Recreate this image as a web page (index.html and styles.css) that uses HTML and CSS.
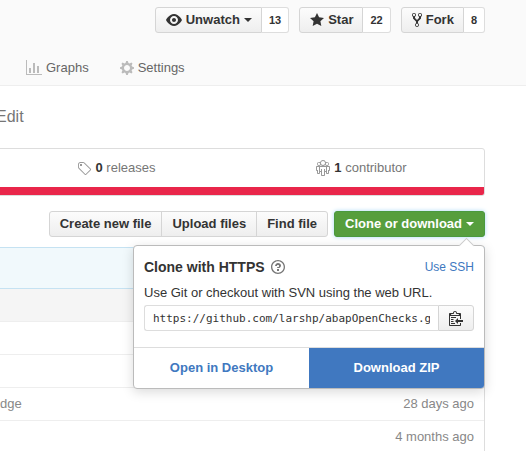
FILE: index.html
```html
<!DOCTYPE html>
<html lang="en">
<head>
<meta charset="utf-8">
<title>larshp/abapOpenChecks</title>
<link rel="stylesheet" href="styles.css">
</head>
<body>
<header class="pagehead">
  <div class="social">
    <div class="social-item">
      <button class="btn btn-group-first" type="button"><svg width="16" height="16" viewBox="0 0 16 16"><path d="M8.06 2C3 2 0 8 0 8s3 6 8.06 6C13 14 16 8 16 8s-3-6-7.94-6zM8 12c-2.2 0-4-1.78-4-4 0-2.2 1.8-4 4-4 2.22 0 4 1.8 4 4 0 2.22-1.78 4-4 4zm2-4c0 1.11-.89 2-2 2-1.11 0-2-.89-2-2 0-1.11.89-2 2-2 1.11 0 2 .89 2 2z"/></svg>Unwatch<span class="arrow"></span></button>
      <a class="count" href="#watchers">13</a>
    </div>
    <div class="social-item">
      <button class="btn btn-group-first" type="button"><svg width="14" height="16" viewBox="0 0 14 16"><path d="M14 6l-4.9-.64L7 1 4.9 5.36 0 6l3.6 3.26L2.67 14 7 11.67 11.33 14l-.93-4.74z"/></svg>Star</button>
      <a class="count" href="#stargazers">22</a>
    </div>
    <div class="social-item">
      <button class="btn btn-group-first" type="button"><svg width="10" height="16" viewBox="0 0 10 16"><path d="M8 1a1.993 1.993 0 0 0-1 3.72V6L5 8 3 6V4.72A1.993 1.993 0 0 0 2 1a1.993 1.993 0 0 0-1 3.72V6.5l3 3v1.78A1.993 1.993 0 0 0 5 15a1.993 1.993 0 0 0 1-3.72V9.5l3-3V4.72A1.993 1.993 0 0 0 8 1zM2 4.2C1.34 4.2.8 3.65.8 3c0-.65.55-1.2 1.2-1.2.65 0 1.2.55 1.2 1.2 0 .65-.55 1.2-1.2 1.2zm3 10c-.66 0-1.2-.55-1.2-1.2 0-.65.55-1.2 1.2-1.2.65 0 1.2.55 1.2 1.2 0 .65-.55 1.2-1.2 1.2zm3-10c-.66 0-1.2-.55-1.2-1.2 0-.65.55-1.2 1.2-1.2.65 0 1.2.55 1.2 1.2 0 .65-.55 1.2-1.2 1.2z"/></svg>Fork</button>
      <a class="count" href="#forks">8</a>
    </div>
  </div>
  <nav class="tabs">
    <a href="#graphs"><svg width="16" height="16" viewBox="0 0 16 16"><path d="M16 14v1H0V0h1v14h15zM5 13H3V8h2v5zm4 0H7V3h2v10zm4 0h-2V6h2v7z"/></svg>Graphs</a>
    <a href="#settings"><svg width="14" height="16" viewBox="0 0 14 16"><path d="M14 8.77v-1.6l-1.94-.64-.45-1.09.88-1.84-1.13-1.13-1.81.91-1.09-.45-.69-1.92h-1.6l-.63 1.94-1.11.45-1.84-.88-1.13 1.13.91 1.81-.45 1.09L0 7.23v1.59l1.94.64.45 1.09-.88 1.84 1.13 1.13 1.81-.91 1.09.45.69 1.92h1.59l.63-1.94 1.11-.45 1.84.88 1.13-1.13-.92-1.81.47-1.09L14 8.75v.02zM7 11c-1.66 0-3-1.34-3-3s1.34-3 3-3 3 1.34 3 3-1.34 3-3 3z"/></svg>Settings</a>
  </nav>
</header>
<main class="content">
  <a class="edit" href="#edit">Edit</a>
  <section class="summary">
    <div class="stats">
      <a href="#releases"><svg width="14" height="16" viewBox="0 0 14 16"><path d="M6.73 2.73c-.47-.47-1.11-.73-1.77-.73H2.5C1.13 2 0 3.13 0 4.5v2.47c0 .66.27 1.3.73 1.77l6.06 6.06c.39.39 1.02.39 1.41 0l4.59-4.59a.996.996 0 0 0 0-1.41L6.73 2.73zM1.38 8.09c-.31-.3-.47-.7-.47-1.13V4.5c0-.88.72-1.59 1.59-1.59h2.47c.42 0 .83.16 1.13.47l6.14 6.13-4.73 4.73-6.13-6.15zM2 4h2v2H2V4z"/></svg><span><b>0</b> releases</span></a>
      <a href="#contributors"><svg width="14" height="16" viewBox="0 0 14 16"><path d="M4.75 4.95C5.3 5.59 6.09 6 7 6c.91 0 1.7-.41 2.25-1.05A1.993 1.993 0 0 0 13 4c0-1.11-.89-2-2-2-.41 0-.77.13-1.08.33A3.01 3.01 0 0 0 7 0C5.58 0 4.39 1 4.08 2.33 3.77 2.13 3.41 2 3 2c-1.11 0-2 .89-2 2a1.993 1.993 0 0 0 3.75.95zm5.2-1.52c.2-.38.59-.64 1.05-.64.66 0 1.2.55 1.2 1.2 0 .65-.55 1.2-1.2 1.2-.65 0-1.17-.53-1.19-1.17.06-.19.11-.39.14-.59zM7 .98c1.11 0 2.02.91 2.02 2.02 0 1.11-.91 2.02-2.02 2.02-1.11 0-2.02-.91-2.02-2.02C4.98 1.89 5.89.98 7 .98zM3 5.2c-.66 0-1.2-.55-1.2-1.2 0-.65.55-1.2 1.2-1.2.45 0 .84.27 1.05.64.03.2.08.41.14.59C4.17 4.67 3.66 5.2 3 5.2zM13 6H1c-.55 0-1 .45-1 1v3c0 .55.45 1 1 1v2c0 .55.45 1 1 1h1c.55 0 1-.45 1-1v-1h1v3c0 .55.45 1 1 1h2c.55 0 1-.45 1-1v-3h1v1c0 .55.45 1 1 1h1c.55 0 1-.45 1-1v-2c.55 0 1-.45 1-1V7c0-.55-.45-1-1-1zM3 13H2v-3H1V7h2v6zm7-2H9V9H8v6H6V9H5v2H4V7h6v4zm3-1h-1v3h-1V7h2v3z"/></svg><span><b>1</b> contributor</span></a>
    </div>
    <div class="language-bar"></div>
  </section>
  <div class="actions">
    <div class="btn-group">
      <button class="btn" type="button">Create new file</button>
      <button class="btn" type="button">Upload files</button>
      <button class="btn" type="button">Find file</button>
    </div>
    <div class="clone">
      <button class="btn btn-primary" type="button" aria-expanded="true">Clone or download<span class="arrow"></span></button>
      <div class="popover">
        <div class="popover-body">
          <div class="popover-head">
            <h2>Clone with HTTPS</h2>
            <a class="help" href="#help" aria-label="Help"><svg width="14" height="16" viewBox="0 0 14 16"><path d="M6 10h2v2H6v-2zm4-3.5C10 8.64 8 9 8 9H6c0-.55.45-1 1-1h.5c.28 0 .5-.22.5-.5v-1c0-.28-.22-.5-.5-.5h-1c-.28 0-.5.22-.5.5V7H4c0-1.5 1.5-3 3-3s3 1 3 2.5zM7 2.3c3.14 0 5.7 2.56 5.7 5.7s-2.56 5.7-5.7 5.7A5.71 5.71 0 0 1 1.3 8c0-3.14 2.56-5.7 5.7-5.7zM7 1C3.14 1 0 4.14 0 8s3.14 7 7 7 7-3.14 7-7-3.14-7-7-7z"/></svg></a>
            <button class="link" type="button">Use SSH</button>
          </div>
          <label for="clone-url">Use Git or checkout with SVN using the web URL.</label>
          <div class="url-group">
            <input id="clone-url" type="text" readonly value="https://github.com/larshp/abapOpenChecks.git">
            <button class="btn" type="button" aria-label="Copy to clipboard"><svg width="14" height="16" viewBox="0 0 14 16"><path d="M2 13h4v1H2v-1zm5-6H2v1h5V7zm2 3V8l-3 3 3 3v-2h5v-2H9zM4.5 9H2v1h2.5V9zM2 12h2.5v-1H2v1zm9 1h1v2c-.02.28-.11.52-.3.7-.19.18-.42.28-.7.3H1c-.55 0-1-.45-1-1V4c0-.55.45-1 1-1h3c0-1.11.89-2 2-2 1.11 0 2 .89 2 2h3c.55 0 1 .45 1 1v5h-1V6H1v9h10v-2zM2 5h8c0-.55-.45-1-1-1H8c-.55 0-1-.45-1-1s-.45-1-1-1-1 .45-1 1-.45 1-1 1H3c-.55 0-1 .45-1 1z"/></svg></button>
          </div>
        </div>
        <div class="popover-links">
          <a href="#desktop">Open in Desktop</a>
          <a class="download" href="#zip">Download ZIP</a>
        </div>
      </div>
    </div>
  </div>
  <div class="commit-tease"></div>
  <table class="files">
    <tr class="latest"><td></td><td class="age"></td></tr>
    <tr><td></td><td class="age"></td></tr>
    <tr><td></td><td class="age"></td></tr>
    <tr><td>dge</td><td class="age">28 days ago</td></tr>
    <tr><td></td><td class="age">4 months ago</td></tr>
  </table>
</main>
</body>
</html>
```
FILE: styles.css
```css
* { box-sizing: border-box; }

body {
  margin: 0;
  overflow: hidden;
  background: #fff;
  color: #333;
  font: 13px/20px "Liberation Sans", Arial, sans-serif;
}

a { color: inherit; text-decoration: none; }
svg { flex: none; fill: currentColor; }

.pagehead {
  padding: 7px 41px 7px 0;
  background: #fafafa;
  border-bottom: 1px solid #eee;
}

.social { display: flex; justify-content: flex-end; gap: 10px; }
.social-item { display: flex; }

.btn {
  display: flex;
  align-items: center;
  justify-content: center;
  gap: 4px;
  height: 26px;
  margin: 0;
  padding: 0 10px;
  border: 1px solid #d5d5d5;
  border-radius: 3px;
  background: linear-gradient(#fcfcfc, #eee);
  color: #333;
  font: bold 13px/20px "Liberation Sans", Arial, sans-serif;
  white-space: nowrap;
}

.btn-group-first { padding-right: 9px; border-radius: 3px 0 0 3px; }

.arrow {
  border: 4px solid transparent;
  border-top-color: currentColor;
  border-bottom-width: 0;
}

.count {
  padding: 2px 7px;
  border: 1px solid #ddd;
  border-left: 0;
  border-radius: 0 3px 3px 0;
  background: #fff;
  font-size: 11px;
  font-weight: bold;
}

.tabs { display: flex; gap: 31px; margin-top: 25px; padding-left: 26px; color: #666; }
.tabs a { display: flex; align-items: center; gap: 4px; }
.tabs svg { color: #bbb; }

.content { padding-right: 41px; }

.edit {
  display: block;
  margin: 20px 0 20px -4px;
  color: #767676;
  font-size: 16px;
  line-height: 22px;
}

.summary {
  margin-left: -7px;
  overflow: hidden;
  border: 1px solid #ddd;
  border-radius: 3px;
}

.stats { display: grid; grid-template-columns: 1fr 1fr; padding: 9px 0; color: #767676; }
.stats a { display: flex; align-items: center; justify-content: center; gap: 4px; }
.stats svg { color: #999; }
.stats b { color: #333; }

.language-bar { height: 8px; background: #e9264a; }

.actions { display: flex; justify-content: flex-end; gap: 6px; margin: 15px 0 10px; }
.btn-group { display: flex; }
.btn-group .btn { border-radius: 0; }
.btn-group .btn + .btn { margin-left: -1px; }
.btn-group .btn:first-child { border-radius: 3px 0 0 3px; }
.btn-group .btn:last-child { border-radius: 0 3px 3px 0; }

.clone { position: relative; }

.btn-primary {
  border-color: #4a993e;
  background: #569e3d;
  color: #fff;
  box-shadow: 0 0 4px #a9d8f5;
}

.popover {
  position: absolute;
  top: 34px;
  right: 0;
  width: 352px;
  border: 1px solid #bbb;
  border-radius: 4px;
  background: #fff;
  box-shadow: 0 3px 12px rgba(0, 0, 0, 0.15);
}

.popover::before {
  content: "";
  position: absolute;
  top: -6px;
  right: 12px;
  width: 10px;
  height: 10px;
  border: solid #ccc;
  border-width: 1px 0 0 1px;
  background: #fff;
  transform: rotate(45deg);
}

.popover-body { position: relative; padding: 11px 10px 16px; }
.popover-head { display: flex; align-items: center; gap: 6px; margin-bottom: 6px; }
.popover-head h2 { margin: 0; font-size: 14px; line-height: 20px; }
.help { display: flex; color: #767676; }

.link {
  margin-left: auto;
  padding: 0;
  border: 0;
  background: none;
  color: #4078c0;
  font: 12px/20px "Liberation Sans", Arial, sans-serif;
}

label { display: block; margin-bottom: 2px; white-space: nowrap; }

.url-group { display: flex; }
.url-group input {
  flex: 1;
  min-width: 0;
  height: 26px;
  padding: 0 8px;
  border: 1px solid #ddd;
  border-right: 0;
  border-radius: 3px 0 0 3px;
  background: #fff;
  color: #333;
  font: 11px "DejaVu Sans Mono", monospace;
}
.url-group .btn { border-radius: 0 3px 3px 0; }

.popover-links { display: grid; grid-template-columns: 1fr 1fr; border-top: 1px solid #ddd; }
.popover-links a {
  padding: 10px;
  color: #4078c0;
  font-weight: bold;
  text-align: center;
}
.popover-links .download {
  border-radius: 0 0 3px 0;
  background: #4078c0;
  color: #fff;
}

.commit-tease {
  height: 42px;
  border: 1px solid #c5e2f2;
  border-left: 0;
  background: #f1f9fc;
}

.files { width: 100%; border-collapse: separate; border-spacing: 0; border-right: 1px solid #ddd; color: #888; }
.files td { height: 33px; padding: 6px 0; border-bottom: 1px solid #eee; }
.files .age { padding-right: 10px; text-align: right; }
.latest td { background: #f5f5f5; }
```
